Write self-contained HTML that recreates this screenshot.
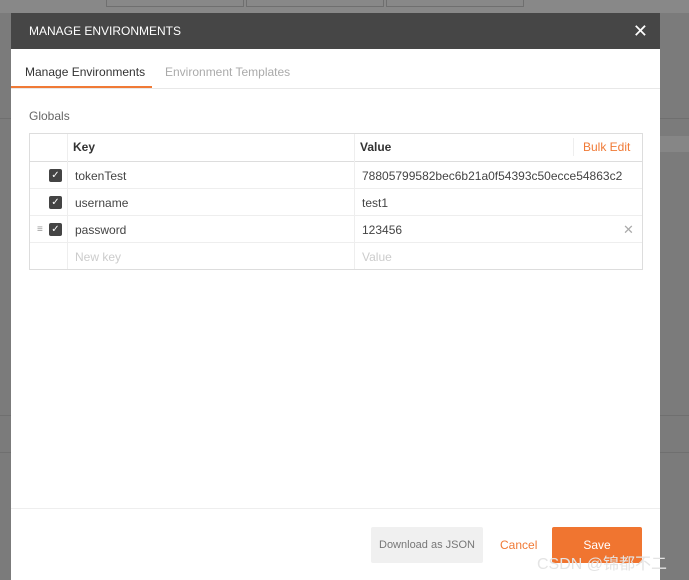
<!DOCTYPE html><html><head><style>
body{margin:0;width:689px;height:580px;background:#7b7b7b;position:relative;overflow:hidden;font-family:"Liberation Sans",sans-serif;}
.a{position:absolute}
.m{left:11px;top:13px;width:649px;height:567px;background:#fff;}
.hd{left:11px;top:13px;width:649px;height:36px;background:#464646;color:#fff;font-size:12px;line-height:36px;}
.t{font-size:12px;}
.cb{width:13px;height:13px;background:#444;border-radius:2px;color:#fff;font-size:10px;line-height:13px;text-align:center}
</style></head><body>
<div class="a" style="left:0;top:0;width:689px;height:13px;background:#888"></div>
<div class="a" style="left:106px;top:0;width:136px;height:6px;border:1px solid #6f6f6f;border-top:0"></div>
<div class="a" style="left:246px;top:0;width:136px;height:6px;border:1px solid #6f6f6f;border-top:0"></div>
<div class="a" style="left:386px;top:0;width:136px;height:6px;border:1px solid #6f6f6f;border-top:0"></div>
<div class="a" style="left:0;top:118px;width:689px;height:1px;background:#6f6f6f"></div>
<div class="a" style="left:660px;top:136px;width:29px;height:16px;background:#868686"></div>
<div class="a" style="left:0;top:415px;width:689px;height:1px;background:#6f6f6f"></div>
<div class="a" style="left:0;top:452px;width:689px;height:1px;background:#6f6f6f"></div>
<div class="a m"></div>
<div class="a hd"><span style="margin-left:18px">MANAGE ENVIRONMENTS</span><span style="position:absolute;right:12px;font-size:18px">✕</span></div>
<div class="a" style="left:11px;top:88px;width:649px;height:1px;background:#e8e8e8"></div>
<div class="a t" style="left:25px;top:65px;color:#333">Manage Environments</div>
<div class="a" style="left:11px;top:86px;width:141px;height:2px;background:#f07a36"></div>
<div class="a t" style="left:165px;top:65px;color:#aaa">Environment Templates</div>
<div class="a t" style="left:29px;top:109px;color:#666">Globals</div>
<div class="a" style="left:29px;top:133px;width:612px;height:135px;border:1px solid #ddd"></div>
<div class="a" style="left:30px;top:161px;width:612px;height:1px;background:#ddd"></div>
<div class="a" style="left:30px;top:188px;width:612px;height:1px;background:#eee"></div>
<div class="a" style="left:30px;top:215px;width:612px;height:1px;background:#eee"></div>
<div class="a" style="left:30px;top:242px;width:612px;height:1px;background:#eee"></div>
<div class="a" style="left:67px;top:134px;width:1px;height:135px;background:#eee"></div>
<div class="a" style="left:354px;top:134px;width:1px;height:135px;background:#eee"></div>
<div class="a" style="left:573px;top:138px;width:1px;height:18px;background:#eee"></div>
<div class="a t" style="left:73px;top:140px;font-weight:bold;color:#333">Key</div>
<div class="a t" style="left:360px;top:140px;font-weight:bold;color:#333">Value</div>
<div class="a t" style="left:583px;top:140px;color:#f07a36">Bulk Edit</div>
<div class="a cb" style="left:49px;top:169px">✓</div>
<div class="a cb" style="left:49px;top:196px">✓</div>
<div class="a cb" style="left:49px;top:223px">✓</div>
<div class="a" style="left:37px;top:224px;font-size:10px;color:#999">≡</div>
<div class="a t" style="left:75px;top:169px;color:#444">tokenTest</div>
<div class="a t" style="left:75px;top:196px;color:#444">username</div>
<div class="a t" style="left:75px;top:223px;color:#444">password</div>
<div class="a t" style="left:75px;top:250px;color:#ccc">New key</div>
<div class="a t" style="left:362px;top:169px;color:#444">78805799582bec6b21a0f54393c50ecce54863c2</div>
<div class="a t" style="left:362px;top:196px;color:#444">test1</div>
<div class="a t" style="left:362px;top:223px;color:#444">123456</div>
<div class="a t" style="left:362px;top:250px;color:#ccc">Value</div>
<div class="a" style="left:623px;top:222px;font-size:13px;color:#aaa">✕</div>
<div class="a" style="left:11px;top:508px;width:649px;height:1px;background:#eee"></div>
<div class="a" style="left:371px;top:527px;width:112px;height:36px;background:#f0f0f0;border-radius:2px;line-height:36px;text-align:center;color:#777;font-size:11px">Download as JSON</div>
<div class="a t" style="left:500px;top:538px;color:#f07a36">Cancel</div>
<div class="a t" style="left:552px;top:527px;width:90px;height:36px;background:#f07530;border-radius:2px;line-height:36px;text-align:center;color:#fff">Save</div>
<div class="a" style="left:537px;top:550px;font-size:16px;color:#e4e4e4;font-family:'Liberation Sans','Noto Sans CJK SC',sans-serif">CSDN @锦都不二</div>
</body></html>
